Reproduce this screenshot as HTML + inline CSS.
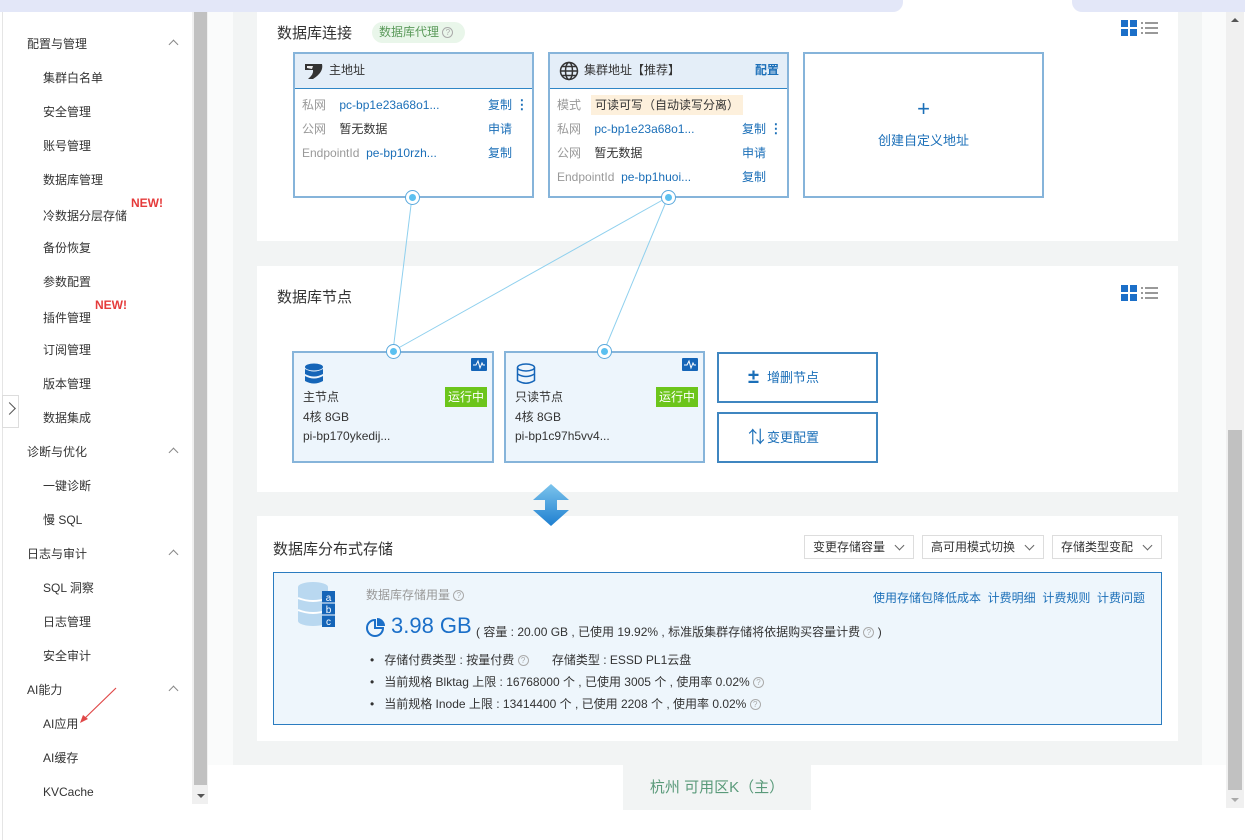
<!DOCTYPE html>
<html><head><meta charset="utf-8">
<style>
*{box-sizing:border-box;margin:0;padding:0}
body{width:1245px;height:840px;overflow:hidden;background:#fff;position:relative;font-family:"Liberation Sans","Noto Sans CJK SC",sans-serif;font-size:12px;color:#333}
.a{position:absolute}
.si{position:absolute;left:43px;font-size:12px;color:#333;line-height:16px}
.sg{position:absolute;left:27px;font-size:12px;color:#333;line-height:16px}
.chev{position:absolute;left:170px;width:7px;height:7px;border-left:1px solid #888;border-top:1px solid #888;transform:rotate(45deg)}
.new{position:absolute;color:#e53b3b;font-weight:bold;font-size:12px}
.card{position:absolute;left:257px;width:921px;background:#fff}
.title{position:absolute;font-size:15px;color:#333}
.box{position:absolute;border:2px solid #86b4da;background:#fff}
.hd{height:35px;background:#e4eef8;border-bottom:1px solid #2f86c6;font-size:12px;line-height:33px;padding-left:34px;color:#333;position:relative}
.row{position:absolute;left:7px;font-size:12px;line-height:16px;white-space:nowrap}
.g{color:#999}
.b{color:#1b6fb8}
.dot{position:absolute;width:15px;height:15px;border-radius:50%;border:1px solid #5aa9dd;background:#fff}
.dot:after{content:"";position:absolute;left:3px;top:3px;width:7px;height:7px;border-radius:50%;background:#5bc0f0}
.node{position:absolute;border:2px solid #86b4da;background:#edf5fc;top:351px;height:112px}
.run{position:absolute;background:#6cc51b;color:#fff;font-size:12px;line-height:20px;padding:0 3px;right:5px;top:34px}
.btn{position:absolute;left:717px;width:161px;height:51px;border:2px solid #3f86c0;background:#fff;color:#1b6fb8;font-size:13px;line-height:47px;padding-left:48px}
.dd{position:absolute;top:535px;height:24px;border:1px solid #ddd;background:#fff;font-size:12px;line-height:22px;padding-left:8px;color:#333}
.dd i{position:absolute;right:10px;top:6px;width:7px;height:7px;border-right:1px solid #666;border-bottom:1px solid #666;transform:rotate(45deg)}
.q{display:inline-block;width:11px;height:11px;border:1px solid #aaa;border-radius:50%;font-size:8px;line-height:9px;text-align:center;color:#aaa;vertical-align:middle;font-style:normal}
</style></head><body>
<!-- sidebar -->
<div class="a" style="left:2px;top:12px;width:1px;height:828px;background:#e5e5e5"></div>
<div class="sg" style="top:-4px;color:#555">性能监控</div>
<div class="sg" style="top:36px">配置与管理</div><div class="chev" style="top:41px"></div>
<div class="si" style="top:70px">集群白名单</div>
<div class="si" style="top:104px">安全管理</div>
<div class="si" style="top:138px">账号管理</div>
<div class="si" style="top:172px">数据库管理</div>
<div class="new" style="left:131px;top:196px">NEW!</div>
<div class="si" style="top:208px">冷数据分层存储</div>
<div class="si" style="top:240px">备份恢复</div>
<div class="si" style="top:274px">参数配置</div>
<div class="new" style="left:95px;top:298px">NEW!</div>
<div class="si" style="top:310px">插件管理</div>
<div class="si" style="top:342px">订阅管理</div>
<div class="si" style="top:376px">版本管理</div>
<div class="si" style="top:410px">数据集成</div>
<div class="sg" style="top:444px">诊断与优化</div><div class="chev" style="top:449px"></div>
<div class="si" style="top:478px">一键诊断</div>
<div class="si" style="top:512px">慢 SQL</div>
<div class="sg" style="top:546px">日志与审计</div><div class="chev" style="top:551px"></div>
<div class="si" style="top:580px">SQL 洞察</div>
<div class="si" style="top:614px">日志管理</div>
<div class="si" style="top:648px">安全审计</div>
<div class="sg" style="top:682px">AI能力</div><div class="chev" style="top:687px"></div>
<div class="si" style="top:716px">AI应用</div>
<div class="si" style="top:750px">AI缓存</div>
<div class="si" style="top:784px">KVCache</div>
<svg class="a" style="left:78px;top:686px" width="40" height="40"><line x1="38" y1="2" x2="4" y2="35" stroke="#e04848" stroke-width="1.2"/><path d="M2 37 L5 29 L10 33 Z" fill="#e04848"/></svg>
<div class="a" style="left:2px;top:395px;width:17px;height:33px;border:1px solid #ddd;background:#fff"></div>
<div class="a" style="left:5px;top:404px;width:9px;height:9px;border-right:1.5px solid #555;border-top:1.5px solid #555;transform:rotate(45deg)"></div>
<div class="a" style="left:192px;top:12px;width:16px;height:792px;background:#f0f0f0"></div>
<div class="a" style="left:194px;top:12px;width:13px;height:773px;background:#c1c1c1"></div>
<div class="a" style="left:197px;top:794px;border-left:4px solid transparent;border-right:4px solid transparent;border-top:4px solid #555"></div>
<!-- main bg -->
<div class="a" style="left:208px;top:12px;width:1018px;height:753px;background:#fafbfb"></div>
<div class="a" style="left:233px;top:12px;width:969px;height:753px;background:#f2f4f4"></div>
<div class="a" style="left:623px;top:765px;width:188px;height:45px;background:#f2f4f4;color:#5a9a7a;font-size:15px;line-height:45px;text-align:center">杭州 可用区K（主）</div>
<!-- right scrollbar -->
<div class="a" style="left:1226px;top:12px;width:18px;height:796px;background:#f0f0f0"></div>
<div class="a" style="left:1228px;top:430px;width:14px;height:360px;background:#c1c1c1"></div>
<div class="a" style="left:1231px;top:18px;border-left:4px solid transparent;border-right:4px solid transparent;border-bottom:4px solid #555"></div>
<div class="a" style="left:1231px;top:798px;border-left:4px solid transparent;border-right:4px solid transparent;border-top:4px solid #aaa"></div>

<!-- card1 -->
<div class="card" style="top:12px;height:229px"></div>
<div class="title" style="left:277px;top:22px">数据库连接</div>
<div class="a" style="left:372px;top:22px;width:93px;height:21px;border-radius:11px;background:#e9f6ea;color:#5a9a5a;font-size:12px;line-height:21px;padding-left:7px">数据库代理 <i class="q">?</i></div>
<svg class="a" style="left:1121px;top:20px" width="38" height="16"><rect x="0" y="0" width="7" height="7" fill="#1b6fc8"/><rect x="9" y="0" width="7" height="7" fill="#1b6fc8"/><rect x="0" y="9" width="7" height="7" fill="#1b6fc8"/><rect x="9" y="9" width="7" height="7" fill="#1b6fc8"/><rect x="20" y="2" width="2" height="2" fill="#999"/><rect x="20" y="7" width="2" height="2" fill="#999"/><rect x="20" y="12" width="2" height="2" fill="#999"/><rect x="24" y="2" width="13" height="2" fill="#999"/><rect x="24" y="7" width="13" height="2" fill="#999"/><rect x="24" y="12" width="13" height="2" fill="#999"/></svg>

<div class="box" style="left:293px;top:52px;width:241px;height:146px">
<div class="hd">主地址<svg class="a" style="left:9px;top:8px" width="20" height="18"><path d="M1 2 L18 2 Q20 10 9 17 L4 17 Q10 12 9 8 L1 8 Z" fill="#333"/><path d="M3 4 L9 4 L8 7 L3 6Z" fill="#eee"/></svg></div>
<div class="row" style="top:43px"><span class="g">私网</span>&nbsp;&nbsp;&nbsp;&nbsp;<span class="b">pc-bp1e23a68o1...</span></div>
<div class="row b" style="top:43px;left:193px">复制 <b style="font-size:13px">⋮</b></div>
<div class="row" style="top:67px"><span class="g">公网</span>&nbsp;&nbsp;&nbsp;&nbsp;暂无数据</div>
<div class="row b" style="top:67px;left:193px">申请</div>
<div class="row" style="top:91px"><span class="g">EndpointId</span>&nbsp;&nbsp;<span class="b">pe-bp10rzh...</span></div>
<div class="row b" style="top:91px;left:193px">复制</div>
</div>
<div class="box" style="left:548px;top:52px;width:241px;height:146px">
<div class="hd">集群地址【推荐】<span class="b" style="position:absolute;right:8px;font-weight:bold">配置</span><svg class="a" style="left:9px;top:7px" width="20" height="20" fill="none" stroke="#333" stroke-width="1.5"><circle cx="10" cy="10" r="8.5"/><ellipse cx="10" cy="10" rx="3.5" ry="8.5"/><line x1="1.5" y1="10" x2="18.5" y2="10"/><line x1="3" y1="5.5" x2="17" y2="5.5"/><line x1="3" y1="14.5" x2="17" y2="14.5"/></svg></div>
<div class="row" style="top:43px"><span class="g">模式</span>&nbsp;&nbsp;&nbsp;<span style="background:#fdf0dc;padding:3px 4px">可读可写（自动读写分离）</span></div>
<div class="row" style="top:67px"><span class="g">私网</span>&nbsp;&nbsp;&nbsp;&nbsp;<span class="b">pc-bp1e23a68o1...</span></div>
<div class="row b" style="top:67px;left:192px">复制 <b style="font-size:13px">⋮</b></div>
<div class="row" style="top:91px"><span class="g">公网</span>&nbsp;&nbsp;&nbsp;&nbsp;暂无数据</div>
<div class="row b" style="top:91px;left:192px">申请</div>
<div class="row" style="top:115px"><span class="g">EndpointId</span>&nbsp;&nbsp;<span class="b">pe-bp1huoi...</span></div>
<div class="row b" style="top:115px;left:192px">复制</div>
</div>
<div class="box" style="left:803px;top:52px;width:241px;height:146px;text-align:center;color:#1b6fb8">
<div style="font-size:22px;line-height:22px;margin-top:44px">+</div>
<div style="font-size:13px;margin-top:10px">创建自定义地址</div>
</div>

<!-- card2 -->
<div class="card" style="top:266px;height:226px"></div>
<div class="title" style="left:277px;top:286px">数据库节点</div>
<svg class="a" style="left:1121px;top:285px" width="38" height="16"><rect x="0" y="0" width="7" height="7" fill="#1b6fc8"/><rect x="9" y="0" width="7" height="7" fill="#1b6fc8"/><rect x="0" y="9" width="7" height="7" fill="#1b6fc8"/><rect x="9" y="9" width="7" height="7" fill="#1b6fc8"/><rect x="20" y="2" width="2" height="2" fill="#999"/><rect x="20" y="7" width="2" height="2" fill="#999"/><rect x="20" y="12" width="2" height="2" fill="#999"/><rect x="24" y="2" width="13" height="2" fill="#999"/><rect x="24" y="7" width="13" height="2" fill="#999"/><rect x="24" y="12" width="13" height="2" fill="#999"/></svg>

<div class="node" style="left:292px;width:202px">
<svg class="a" style="left:10px;top:10px" width="20" height="22"><ellipse cx="10" cy="4" rx="9" ry="3.5" fill="#1565b8"/><path d="M1 6 Q10 11 19 6 L19 11 Q10 16 1 11Z" fill="#1565b8"/><path d="M1 13 Q10 18 19 13 L19 18 Q10 23 1 18Z" fill="#1565b8"/></svg>
<svg class="a" style="right:5px;top:5px" width="16" height="13"><rect width="16" height="13" rx="1" fill="#1565b8"/><path d="M2 7 L5 7 L7 3 L9 10 L11 5 L12 7 L14 7" stroke="#fff" fill="none"/></svg>
<div class="a" style="left:9px;top:35px">主节点</div>
<div class="a" style="left:9px;top:55px">4核 8GB</div>
<div class="a" style="left:9px;top:76px">pi-bp170ykedij...</div>
<div class="run">运行中</div>
</div>
<div class="node" style="left:504px;width:201px">
<svg class="a" style="left:10px;top:10px" width="20" height="22" fill="none" stroke="#1565b8" stroke-width="1.5"><ellipse cx="10" cy="4.5" rx="8.5" ry="3.5"/><path d="M1.5 4.5 L1.5 17.5 Q10 23 18.5 17.5 L18.5 4.5"/><path d="M1.5 11 Q10 16 18.5 11"/></svg>
<svg class="a" style="right:5px;top:5px" width="16" height="13"><rect width="16" height="13" rx="1" fill="#1565b8"/><path d="M2 7 L5 7 L7 3 L9 10 L11 5 L12 7 L14 7" stroke="#fff" fill="none"/></svg>
<div class="a" style="left:9px;top:35px">只读节点</div>
<div class="a" style="left:9px;top:55px">4核 8GB</div>
<div class="a" style="left:9px;top:76px">pi-bp1c97h5vv4...</div>
<div class="run">运行中</div>
</div>
<div class="btn" style="top:352px"><span class="a" style="left:29px;top:0;font-size:20px;font-weight:bold">±</span>增删节点</div>
<div class="btn" style="top:412px"><span class="a" style="left:29px;top:0;font-size:17px">⇅</span>变更配置</div>

<svg class="a" style="left:0;top:0" width="1245" height="840">
<line x1="412" y1="197" x2="393" y2="351" stroke="#8fd0ee" stroke-width="1"/>
<line x1="668" y1="197" x2="393" y2="351" stroke="#8fd0ee" stroke-width="1"/>
<line x1="668" y1="197" x2="604" y2="351" stroke="#8fd0ee" stroke-width="1"/>
<defs><linearGradient id="ag" x1="0" y1="0" x2="0" y2="1"><stop offset="0" stop-color="#7cc4ec"/><stop offset="1" stop-color="#1e7fd0"/></linearGradient></defs>
</svg>
<div class="dot" style="left:405px;top:190px"></div>
<div class="dot" style="left:661px;top:190px"></div>
<div class="dot" style="left:386px;top:344px"></div>
<div class="dot" style="left:597px;top:344px"></div>

<!-- card3 -->
<div class="card" style="top:516px;height:225px"></div>
<svg class="a" style="left:533px;top:484px" width="37" height="43"><path d="M18 0 L36 16 L24 16 L24 26 L36 26 L18 42 L0 26 L12 26 L12 16 L0 16 Z" fill="url(#ag)"/></svg>
<div class="title" style="left:273px;top:538px">数据库分布式存储</div>
<div class="dd" style="left:804px;width:110px">变更存储容量<i></i></div>
<div class="dd" style="left:922px;width:122px">高可用模式切换<i></i></div>
<div class="dd" style="left:1052px;width:110px">存储类型变配<i></i></div>
<div class="a" style="left:273px;top:572px;width:889px;height:153px;background:#eef6fc;border:1px solid #2a7cc0"></div>
<svg class="a" style="left:297px;top:582px" width="42" height="46"><ellipse cx="16" cy="5" rx="15" ry="5" fill="#b9d8f0"/><rect x="1" y="5" width="30" height="34" fill="#b9d8f0"/><ellipse cx="16" cy="39" rx="15" ry="5" fill="#b9d8f0"/><path d="M1 16 Q16 22 31 16 M1 28 Q16 34 31 28" stroke="#fff" fill="none" stroke-width="2"/><rect x="25" y="9" width="13" height="36" fill="#1565b8"/><text x="31.5" y="19" fill="#fff" font-size="10" text-anchor="middle" font-family="Liberation Sans">a</text><text x="31.5" y="31" fill="#fff" font-size="10" text-anchor="middle" font-family="Liberation Sans">b</text><text x="31.5" y="43" fill="#fff" font-size="10" text-anchor="middle" font-family="Liberation Sans">c</text><line x1="25" y1="21" x2="38" y2="21" stroke="#fff"/><line x1="25" y1="33" x2="38" y2="33" stroke="#fff"/></svg>
<div class="a" style="left:366px;top:586px;color:#999">数据库存储用量 <i class="q">?</i></div>
<div class="a b" style="left:873px;top:589px">使用存储包降低成本&nbsp;&nbsp;计费明细&nbsp;&nbsp;计费规则&nbsp;&nbsp;计费问题</div>
<svg class="a" style="left:366px;top:617px" width="20" height="22"><path d="M9 3 A8 8 0 1 0 17 11 L9 11 Z" fill="none" stroke="#1b6fc8" stroke-width="2"/><path d="M11 1 A8 8 0 0 1 19 9 L11 9 Z" fill="#1b6fc8"/></svg>
<div class="a" style="left:391px;top:613px;font-size:22px;color:#1b6fc8">3.98 GB</div>
<div class="a" style="left:476px;top:623px;font-size:12px">( 容量 : 20.00 GB , 已使用 19.92% , 标准版集群存储将依据购买容量计费 <i class="q">?</i> )</div>
<div class="a" style="left:370px;top:649px;line-height:22px">
<div>•&nbsp;&nbsp;&nbsp;存储付费类型 : 按量付费 <i class="q">?</i>&nbsp;&nbsp;&nbsp;&nbsp;&nbsp;&nbsp;&nbsp;存储类型 : ESSD PL1云盘</div>
<div>•&nbsp;&nbsp;&nbsp;当前规格 Blktag 上限 : 16768000 个 , 已使用 3005 个 , 使用率 0.02% <i class="q">?</i></div>
<div>•&nbsp;&nbsp;&nbsp;当前规格 Inode 上限 : 13414400 个 , 已使用 2208 个 , 使用率 0.02% <i class="q">?</i></div>
</div>
<!-- top bar (on top) -->
<div class="a" style="left:0;top:0;width:903px;height:12px;background:#e3e7f8;border-bottom-right-radius:10px"></div>
<div class="a" style="left:1072px;top:0;width:173px;height:12px;background:#e3e7f8;border-bottom-left-radius:10px"></div>
</body></html>
